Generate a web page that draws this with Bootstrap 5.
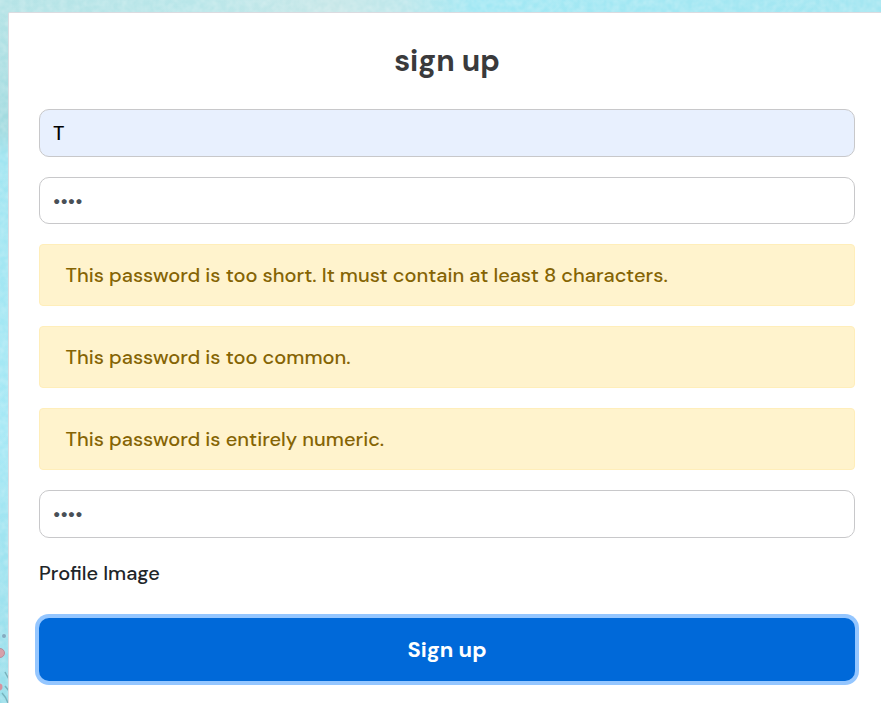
<!DOCTYPE html>
<html lang="en">
<head>
<meta charset="utf-8">
<meta name="viewport" content="width=device-width, initial-scale=1">
<title>Sign up</title>
<link href="https://cdn.jsdelivr.net/npm/bootstrap@5.3.0/dist/css/bootstrap.min.css" rel="stylesheet">
<style>
  body { font-family: "DM Sans", Inter, sans-serif; font-size: 20px; line-height: 30px; color: #212529; height: 703px; background: #a9e9f5; }
  .backdrop { inset: 0; z-index: -1; }
  .signup-card { width: 878px; height: 691px; margin: 12px 0 0 8px; padding: 30px 30px 0; border: 1px solid #dcdbe0; border-bottom: 0; border-radius: 2px 2px 0 0; background: #fff; }
  .signup-card h1 { font-size: 30px; line-height: 36px; font-weight: 700; color: #3a3a3c; margin-bottom: 30px; }
  .form-control { height: 48px; border: 1px solid #c8c8ca; border-radius: 10px; padding: 6px 13px; font-size: 20px; font-weight: 500; color: #495057; margin-bottom: 20px; }
  .form-control.first-pass { height: 47px; }
  .form-control.filled { background: #e8f0fe; color: #000; }
  .signup-card .alert { height: 62px; padding: 15px 25.5px; margin-bottom: 20px; border: 1px solid #ffeeba; border-radius: 4px; background: #fff3cd; color: #856404; font-weight: 500; white-space: nowrap; }
  .profile-label { margin-bottom: 30px; font-weight: 500; }
  .signup-btn { height: 63px; border: 0; border-radius: 10px; background: #0069d9; color: #fff; font-size: 22px; font-weight: 700; box-shadow: 0 0 0 4px #94c6ff; }
</style>
</head>
<body class="overflow-hidden">
<svg class="backdrop position-absolute" width="881" height="703" aria-hidden="true">
  <defs>
    <linearGradient id="sky"><stop offset="0" stop-color="#b5e3e6"/><stop offset=".22" stop-color="#b9e6e9"/><stop offset=".38" stop-color="#c7e7e8"/><stop offset=".46" stop-color="#bde7eb"/><stop offset=".54" stop-color="#a2e8f4"/><stop offset="1" stop-color="#a4e6f1"/></linearGradient>
    <linearGradient id="side" x2="0" y2="1"><stop offset="0" stop-color="#b5e3e6"/><stop offset=".17" stop-color="#a1dadf"/><stop offset=".21" stop-color="#a1e5f1"/><stop offset=".6" stop-color="#a6e8f5"/><stop offset="1" stop-color="#99deea"/></linearGradient>
    <filter id="grain" x="0" y="0" width="100%" height="100%"><feTurbulence type="fractalNoise" baseFrequency=".15" numOctaves="2" seed="4"/><feColorMatrix values="0 0 0 0 1  0 0 0 0 1  0 0 0 0 1  .4 0 0 0 -.12"/></filter>
  </defs>
  <rect width="881" height="13" fill="url(#sky)"/>
  <rect y="12" width="9" height="691" fill="url(#side)"/>
  <rect width="881" height="13" filter="url(#grain)"/>
  <rect y="13" width="9" height="690" filter="url(#grain)"/>
  <circle cx="4" cy="636" r="2" fill="#85abc0"/>
  <circle cx="0" cy="653" r="4.5" fill="#d6a0a9" stroke="#b68c9b"/>
  <circle cx="-1" cy="687" r="3.5" fill="#d6929f"/>
  <path d="M5 672q2 4 4 7M2 693q4 4 6 10M5 686l4 5" fill="none" stroke="#79b3bd" stroke-width="1.5"/>
</svg>
<main class="signup-card">
  <h1 class="text-center">sign up</h1>
  <form>
    <input class="form-control filled" type="text" value="T" aria-label="Username">
    <input class="form-control first-pass" type="password" value="1234" aria-label="Password">
    <div class="alert">This password is too short. It must contain at least 8 characters.</div>
    <div class="alert">This password is too common.</div>
    <div class="alert">This password is entirely numeric.</div>
    <input class="form-control" type="password" value="1234" aria-label="Confirm password">
    <label class="profile-label d-block">Profile Image</label>
    <button class="btn signup-btn w-100 d-block" type="button">Sign up</button>
  </form>
</main>
<script src="https://cdn.jsdelivr.net/npm/bootstrap@5.3.0/dist/js/bootstrap.bundle.min.js"></script>
</body>
</html>
